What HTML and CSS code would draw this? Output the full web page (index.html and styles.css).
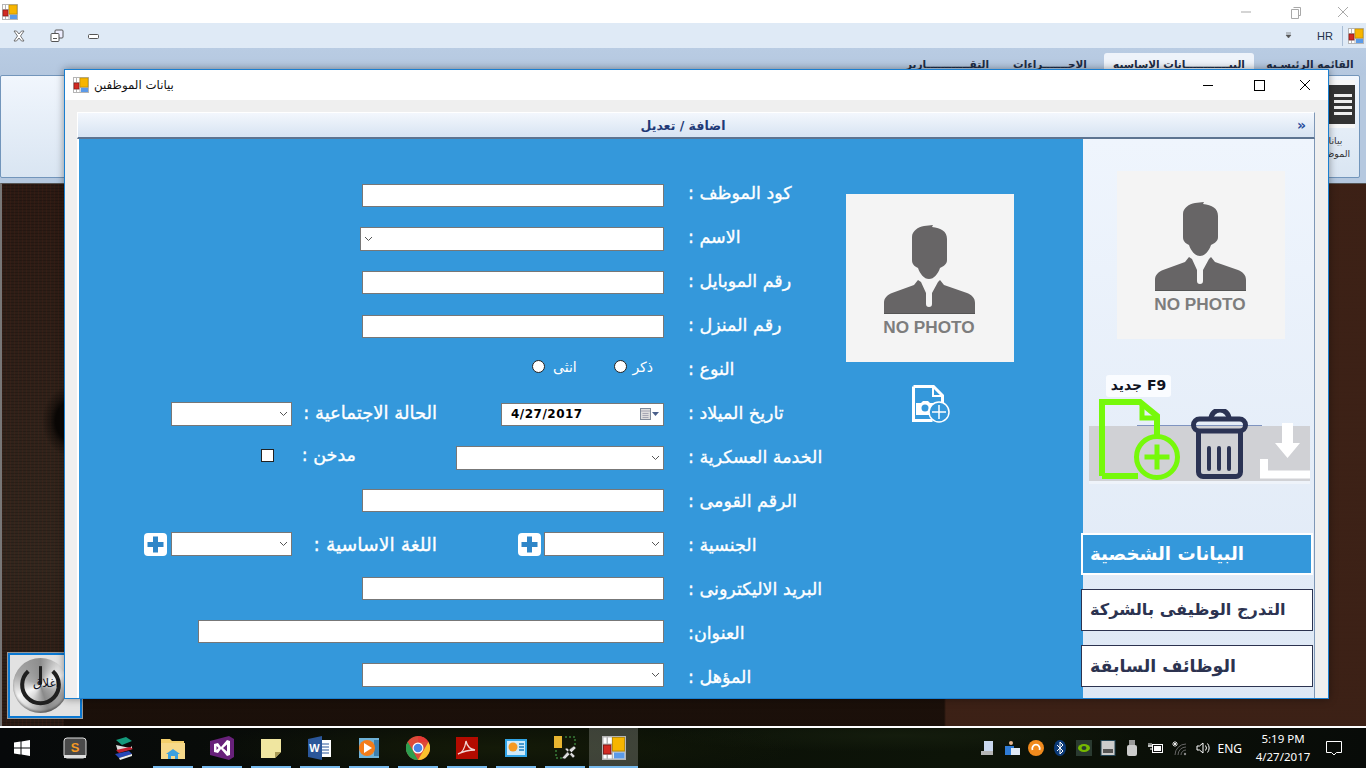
FILE: index.html
```html
<!DOCTYPE html>
<html lang="ar">
<head>
<meta charset="utf-8">
<title>HR</title>
<link rel="stylesheet" href="styles.css">
</head>
<body>
<svg class="defs" width="0" height="0">
  <symbol id="app" viewBox="0 0 16 16">
    <rect x="0.5" y="0.5" width="15" height="15" fill="#fff" stroke="#b5b5b5"/>
    <path d="M0 5.500h7M0 12h7M3.500 0v16M7 0v16M7 10.500h9" stroke="#b5b5b5" fill="none"/>
    <rect x="7" y="1" width="8" height="9" fill="#f7b500" stroke="#b98a00" stroke-width=".6"/>
    <rect x="1" y="6" width="5" height="6" fill="#d22a22" stroke="#7c1512" stroke-width=".6"/>
    <rect x="8" y="11" width="7" height="4" fill="#5b9ae8"/>
  </symbol>
  <symbol id="person" viewBox="0 0 168 168">
    <path d="M38 119v-10c0-5 3-8 8-10l22-8 4-5 3 2 5 11v11a3 3 0 0 0 6 0V99l6-11 2-2 4 5 23 8c5 2 8 5 8 10v10z" fill="#676566"/>
    <path d="M66 43c0-6 6-10 12-11l9-1-1 2c9 1 15 4 15 12v21c0 4-3 6-7 8-2 6-6 11-11 11s-9-5-11-11c-4-2-6-4-6-8z" fill="#676566"/>
    <rect x="38" y="119" width="91" height="1" fill="#555"/>
  </symbol>
  <symbol id="chev" viewBox="0 0 9 6">
    <path d="M1 1l3.500 3.500L8 1" fill="none" stroke="#555" stroke-width="1"/>
  </symbol>
  <symbol id="plus" viewBox="0 0 23 23">
    <rect width="23" height="23" rx="4" fill="#fff"/>
    <path d="M11.500 3.500v16M3.500 11.500h16" stroke="#2f86c8" stroke-width="5"/>
  </symbol>
</svg>

<div class="desktop">
  <div class="app-title">
    <svg class="app-icon"><use href="#app"/></svg>
    <div class="win-ctrls faint">
      <svg class="ctl" viewBox="0 0 46 20"><path d="M13 10h10" stroke="#a9a9a9"/></svg>
      <svg class="ctl" viewBox="0 0 46 20"><path d="M19.500 5.500h7v8h-2M17.500 7.500h7v9h-7z" stroke="#a9a9a9" fill="#fff"/></svg>
      <svg class="ctl" viewBox="0 0 46 20"><path d="M18 5l10 10M28 5L18 15" stroke="#a9a9a9"/></svg>
    </div>
  </div>

  <div class="qat">
    <svg class="qat-btn" viewBox="0 0 14 12"><path d="M2 1h2.500L7 4l2.500-3H12L8.500 6 12 11H9.500L7 8l-2.500 3H2l3.500-5z" fill="#fff" stroke="#555" stroke-width=".8"/></svg>
    <svg class="qat-btn" viewBox="0 0 14 14"><rect x="5" y="1" width="8" height="8" rx="1" fill="#eef" stroke="#555"/><rect x="1" y="4.500" width="8" height="8" rx="1" fill="#fff" stroke="#555"/><path d="M3 9.500h4" stroke="#555"/></svg>
    <svg class="qat-btn" viewBox="0 0 14 14"><rect x="2.500" y="5.500" width="10" height="4" rx="1" fill="#fff" stroke="#555"/></svg>
    <div class="qat-right">
      <svg class="qat-arrow" viewBox="0 0 7 7"><path d="M1 1h5M1 3h5L3.500 6z" stroke="#555" fill="#555" stroke-width=".6"/></svg>
      <span class="hr">HR</span>
      <span class="qat-sep"></span>
      <svg class="app-icon"><use href="#app"/></svg>
    </div>
  </div>

  <div class="tabs" dir="rtl">
    <span class="tab t1">القائمه الرئيسـيه</span>
    <span class="tab t2 active">البيــــــــــــانات الاساسيه</span>
    <span class="tab t3">الاجـــــــراءات</span>
    <span class="tab t4">التقــــــــــــارير</span>
  </div>

  <div class="ribbon">
    <div class="ribbon-box">
      <div class="ribbon-item">
        <div class="menu-thumb"><span></span><span></span><span></span><span></span></div>
        <div class="ribbon-label">بيانات<br>الموظفين</div>
      </div>
    </div>
  </div>

  <div class="wood">
    <div class="close-btn">
      <div class="metal">
        <svg class="power" viewBox="0 0 54 54">
          <path d="M15 13A18 18 0 1 0 39 13" fill="none" stroke="#202020" stroke-width="4"/>
          <path d="M27 8v18" stroke="#202020" stroke-width="3"/>
        </svg>
      </div>
      <span class="close-text">اغلاق</span>
    </div>
  </div>

  <div class="white-line"></div>

  <div class="taskbar">
    <div class="start">
      <svg viewBox="0 0 16 16" width="16" height="16"><path d="M0 2.500L6.500 1.500v6H0zM7.500 1.400L16 0v7.500H7.500zM0 8.500h6.500v6L0 13.500zM7.500 8.500H16V16l-8.500-1.400z" fill="#fff"/></svg>
    </div>
    <div class="tile"><svg viewBox="0 0 24 24"><rect x="1" y="2" width="22" height="20" rx="3" fill="#4a4a4a" stroke="#ddd"/><rect x="1" y="19" width="22" height="3" fill="#ddd"/><text x="12" y="16" class="sub-s">S</text></svg></div>
    <div class="tile"><svg viewBox="0 0 24 24"><path d="M4 4l10-3 6 4-10 4z" fill="#149a7c"/><path d="M4 9l14 3 2-2v3L6 16z" fill="#ddd"/><path d="M4 14l14-3 3 2-14 4z" fill="#c21f2e"/><path d="M3 18l14-3 3 3-13 4z" fill="#2747b8"/><path d="M7 22l13-4v2L8 24z" fill="#eee"/></svg></div>
    <div class="tile run"><svg viewBox="0 0 24 24"><path d="M0 3h9l2 2h12v6H0z" fill="#f3cf6b"/><rect y="7" width="24" height="16" fill="#f6d98a"/><path d="M7 23v-5h10v5h-3v-3h-4v3z" fill="#3aa0e0"/><path d="M5 18l7-5 7 5z" fill="#3aa0e0"/></svg></div>
    <div class="tile run"><svg viewBox="0 0 24 24"><path d="M0 5l19-5 5 3v18l-5 3L0 19z" fill="#68217a"/><path d="M4 8l4-1 3 4 6-7 3 1v14l-3 1-6-7-3 4-4-1zM6.500 10v4l2-2zM13 12l4 3.500v-7z" fill="#fff" fill-rule="evenodd"/></svg></div>
    <div class="tile run"><svg viewBox="0 0 24 24"><path d="M2 3h20v13l-6 6H2z" fill="#f0e6a0"/><path d="M22 16l-6 6v-6z" fill="#a89a55"/></svg></div>
    <div class="tile run"><svg viewBox="0 0 24 24"><rect x="10" y="4" width="13" height="17" fill="#fff"/><path d="M14 8h7M14 11h7M14 14h7M14 17h7" stroke="#2b579a"/><path d="M0 3l14-3v24L0 21z" fill="#2b579a"/><text x="6.500" y="16" class="sub-w">W</text></svg></div>
    <div class="tile run"><svg viewBox="0 0 24 24"><rect x="2" y="2" width="20" height="20" fill="#6fb2d8"/><rect x="17" y="4" width="5" height="16" fill="#3d7fae"/><circle cx="10" cy="12" r="8" fill="#f47c1a"/><path d="M7 7l8 5-8 5z" fill="#fff"/></svg></div>
    <div class="tile run"><svg viewBox="0 0 24 24"><circle cx="12" cy="12" r="12" fill="#dd4b39"/><path d="M12 0a12 12 0 0 1 10.400 6H12z" fill="#e53935"/><path d="M1.600 6L7 15l-1.500 7A12 12 0 0 1 1.600 6z" fill="#3aa757"/><path d="M12 24l5-8.500L22.400 6A12 12 0 0 1 12 24z" fill="#fbc02d"/><path d="M1.600 6L7 15 12 24a12 12 0 0 1-10.400-18z" fill="#2e9e4f"/><circle cx="12" cy="12" r="5.500" fill="#fff"/><circle cx="12" cy="12" r="4.300" fill="#4a84e8"/></svg></div>
    <div class="tile run"><svg viewBox="0 0 24 24"><rect x="1" y="1" width="22" height="22" fill="#b30b00"/><path d="M3 18c4-1 7-6 8-13 1 5 3 8 9 9-6 0-11 1-17 4z" fill="none" stroke="#f3d6d3" stroke-width="1.300"/></svg></div>
    <div class="tile run"><svg viewBox="0 0 24 24"><rect x="1" y="3" width="22" height="18" fill="#31a5e6"/><rect x="3" y="5" width="18" height="14" fill="#cfeaf9"/><circle cx="9" cy="11" r="4.500" fill="#f59a23"/><path d="M15 8h5M15 11h5M15 14h5" stroke="#1d7fc1" stroke-width="1.500"/></svg></div>
    <div class="tile run"><svg viewBox="0 0 24 24"><rect x="1" y="0" width="8" height="12" fill="#e8b530"/><path d="M12 1h10v10M3 14v8h8" fill="none" stroke="#4caf50" stroke-dasharray="2 2"/><path d="M9 22l8-9 4-3 2 2-3 3-8 8zM12 13l8 9 2-2-8-8z" fill="#ddd" stroke="#333" stroke-width=".5"/></svg></div>
    <div class="tile active-app run-full"><svg viewBox="0 0 24 24"><use href="#app"/></svg></div>
    <div class="tray">
      <svg viewBox="0 0 16 16"><rect x="4" y="1" width="9" height="12" fill="#c9d8ee"/><rect x="1" y="11" width="12" height="4" fill="#b5b5b5"/></svg>
      <svg viewBox="0 0 16 16"><circle cx="7" cy="3" r="2" fill="#e8b890"/><rect x="1" y="6" width="9" height="9" fill="#2f7cd6"/><rect x="7" y="8" width="9" height="7" fill="#dfe9f5"/></svg>
      <svg viewBox="0 0 16 16"><circle cx="8" cy="8" r="8" fill="#f08a1d"/><path d="M4.500 10a3.800 3.800 0 1 1 7 0" fill="none" stroke="#fff" stroke-width="1.800"/></svg>
      <svg viewBox="0 0 16 16"><ellipse cx="8" cy="8" rx="6" ry="8" fill="#0b3a78"/><path d="M5 5l6 6-3 3V2l3 3-6 6" fill="none" stroke="#fff"/></svg>
      <svg viewBox="0 0 16 16"><rect width="16" height="16" fill="#2a3a30"/><ellipse cx="8" cy="8" rx="6" ry="4" fill="#76b900"/><ellipse cx="8" cy="8" rx="2.500" ry="2" fill="#2a3a30"/></svg>
      <svg viewBox="0 0 16 16"><rect x="1" y="0.500" width="14" height="15" fill="#ccc" stroke="#245"/><rect x="3" y="9" width="10" height="4" fill="#555"/></svg>
      <svg viewBox="0 0 16 16"><rect x="5" y="0" width="6" height="5" fill="#999"/><rect x="3" y="5" width="10" height="11" rx="2" fill="#ccc"/></svg>
      <svg viewBox="0 0 16 16"><path d="M1 3v4M3 3v4M0 6h4M2 9h2" stroke="#fff" fill="none"/><rect x="4.500" y="4.500" width="10" height="8" fill="#111" stroke="#fff"/><rect x="6" y="6" width="7" height="5" fill="#fff"/></svg>
      <svg viewBox="0 0 16 16"><path d="M3 15a11 11 0 0 1 11-11M6 15a8 8 0 0 1 8-8M9 15a5 5 0 0 1 5-5" fill="none" stroke="#666"/><circle cx="13" cy="14" r="1.200" fill="#888"/><path d="M3 1v6M0 4h6M1 2l4 4M5 2L1 6" stroke="#fff" stroke-width=".8"/></svg>
      <svg viewBox="0 0 16 16"><path d="M1 6h2.500L7 3v10L3.500 10H1z" fill="none" stroke="#fff"/><path d="M9.500 5.500a4 4 0 0 1 0 5M11.500 3.500a7 7 0 0 1 0 9" fill="none" stroke="#fff"/></svg>
      <span class="eng">ENG</span>
      <div class="clock"><span>5:19 PM</span><span>4/27/2017</span></div>
      <svg class="notif" viewBox="0 0 16 16"><path d="M.5 1.500h15v11h-5L8 15l-2.500-2.500h-5z" fill="none" stroke="#fff"/></svg>
    </div>
  </div>

  <section class="dialog">
    <header class="dlg-title">
      <svg class="dlg-icon"><use href="#app"/></svg>
      <span class="dlg-name">بيانات الموظفين</span>
      <div class="win-ctrls">
        <svg class="ctl" viewBox="0 0 46 20"><path d="M13 10.500h10" stroke="#000" stroke-width="1"/></svg>
        <svg class="ctl" viewBox="0 0 46 20"><rect x="18.500" y="5.500" width="10" height="10" fill="none" stroke="#000"/></svg>
        <svg class="ctl" viewBox="0 0 46 20"><path d="M18 5l10 10M28 5L18 15" stroke="#000"/></svg>
      </div>
    </header>
    <div class="dlg-body">
      <div class="panel-head">
        <span class="panel-title">اضافة / تعديل</span>
        <span class="chevrons">»</span>
      </div>
      <div class="panel-main">
        <form class="form">
          <div class="fields-col">
            <div class="row"><input class="box w302" type="text"></div>
            <div class="row"><div class="box combo chev-left w304"><svg class="chev"><use href="#chev"/></svg></div></div>
            <div class="row"><input class="box w302" type="text"></div>
            <div class="row"><input class="box w302" type="text"></div>
            <div class="row">
              <div class="gender">
                <span class="radio"></span><span class="rtext anth">انثى</span>
                <span class="radio second"></span><span class="rtext">ذكر</span>
              </div>
            </div>
            <div class="row split">
              <div class="sub-left">
                <div class="box combo w121"><svg class="chev"><use href="#chev"/></svg></div>
                <label class="lbl2" dir="rtl">الحالة الاجتماعية :</label>
              </div>
              <div class="sub-right">
                <div class="box date"><span class="date-val">4/27/2017</span>
                  <svg class="cal" viewBox="0 0 20 14"><rect x=".5" y="1.500" width="10" height="11" fill="#ddd" stroke="#7f8a99"/><path d="M1 4h9M2.500 6.500h6M2.500 8.500h6M2.500 10.500h6" stroke="#99a" stroke-width=".8"/><path d="M12 5h7l-3.500 4z" fill="#4a5f8a"/></svg>
                </div>
              </div>
            </div>
            <div class="row split">
              <div class="sub-left smoker">
                <span class="check"></span>
                <label class="lbl3" dir="rtl">مدخن :</label>
              </div>
              <div class="sub-right">
                <div class="box combo w208"><svg class="chev"><use href="#chev"/></svg></div>
              </div>
            </div>
            <div class="row"><input class="box w302" type="text"></div>
            <div class="row split">
              <div class="sub-left">
                <svg class="plus plus-lang"><use href="#plus"/></svg>
                <div class="box combo w121"><svg class="chev"><use href="#chev"/></svg></div>
                <label class="lbl2 lang" dir="rtl">اللغة الاساسية :</label>
              </div>
              <div class="sub-right">
                <svg class="plus"><use href="#plus"/></svg>
                <div class="box combo w120"><svg class="chev"><use href="#chev"/></svg></div>
              </div>
            </div>
            <div class="row"><input class="box w302" type="text"></div>
            <div class="row"><input class="box w466" type="text"></div>
            <div class="row"><div class="box combo w302"><svg class="chev"><use href="#chev"/></svg></div></div>
          </div>
          <div class="labels-col" dir="rtl">
            <label class="lbl">كود الموظف :</label>
            <label class="lbl">الاسم :</label>
            <label class="lbl">رقم الموبايل :</label>
            <label class="lbl">رقم المنزل :</label>
            <label class="lbl">النوع :</label>
            <label class="lbl">تاريخ الميلاد :</label>
            <label class="lbl">الخدمة العسكرية :</label>
            <label class="lbl">الرقم القومى :</label>
            <label class="lbl">الجنسية :</label>
            <label class="lbl">البريد الاليكترونى :</label>
            <label class="lbl">العنوان:</label>
            <label class="lbl">المؤهل :</label>
          </div>
          <div class="photo-col">
            <div class="photo">
              <svg class="person"><use href="#person"/></svg>
              <span class="nophoto">NO PHOTO</span>
            </div>
            <svg class="add-photo" viewBox="0 0 38 38">
              <path d="M1.500 1.500h20l9 9v13M1.500 1.500v34h19" fill="none" stroke="#fff" stroke-width="3"/>
              <path d="M21 2v9h9" fill="none" stroke="#fff" stroke-width="2"/>
              <path d="M4 18h5l2-2h5l2 2h3v12H4z" fill="#fff"/>
              <circle cx="13" cy="23" r="3.500" fill="#3498db"/>
              <circle cx="27" cy="27" r="10" fill="#3498db" stroke="#fff" stroke-width="1.500"/>
              <path d="M27 20v14M20 27h14" stroke="#fff" stroke-width="1.500"/>
            </svg>
          </div>
        </form>
        <aside class="side">
          <div class="photo side-photo">
            <svg class="person"><use href="#person"/></svg>
            <span class="nophoto">NO PHOTO</span>
          </div>
          <div class="strip">
            <span class="strip-line"></span>
            <span class="tip" dir="rtl">F9 جديد</span>
            <svg class="tool t-new" viewBox="0 0 81 82">
              <path d="M3 77V3h38l17 14v21M3 77h36" fill="none" stroke="#76f90a" stroke-width="6"/>
              <path d="M43 3v16h15" fill="none" stroke="#76f90a" stroke-width="5"/>
              <circle cx="58" cy="58" r="20.500" fill="#d0d1d5" stroke="#76f90a" stroke-width="5"/>
              <path d="M58 45.500v25M45.500 58h25" stroke="#76f90a" stroke-width="5"/>
            </svg>
            <svg class="tool t-trash" viewBox="0 0 58 70">
              <path d="M20 10a9 9 0 0 1 18 0" fill="none" stroke="#2b3354" stroke-width="5"/>
              <rect x="2.500" y="10" width="52" height="12" rx="6" fill="none" stroke="#2b3354" stroke-width="5"/>
              <path d="M7.500 22v41a4.500 4.500 0 0 0 4.500 4.500h33a4.500 4.500 0 0 0 4.500-4.500V22" fill="none" stroke="#2b3354" stroke-width="5"/>
              <path d="M18 39v21M28 39v21M38 39v21" stroke="#2b3354" stroke-width="4" stroke-linecap="round"/>
            </svg>
            <svg class="tool t-down" viewBox="0 0 50 56">
              <path d="M22 0h11v20h7L27.500 35 15 20h7z" fill="#fff"/>
              <path d="M4 36v15.500h46" fill="none" stroke="#fff" stroke-width="8"/>
            </svg>
          </div>
          <nav class="side-nav">
            <a class="nav-btn on" dir="rtl">البيانات الشخصية</a>
            <a class="nav-btn second" dir="rtl">التدرج الوظيفى بالشركة</a>
            <a class="nav-btn third" dir="rtl">الوظائف السابقة</a>
          </nav>
        </aside>
      </div>
    </div>
  </section>
</div>
</body>
</html>
```

FILE: styles.css
```css
* { box-sizing: border-box; }
html, body { margin: 0; padding: 0; }
body { font-family: "DejaVu Sans", sans-serif; }
.defs { position: absolute; }

.desktop {
  position: relative;
  width: 1366px;
  height: 768px;
  overflow: hidden;
  display: flex;
  flex-direction: column;
  background: #000;
}

/* App chrome */
.app-title {
  height: 23px;
  background: #fff;
  display: flex;
  align-items: center;
  justify-content: space-between;
  padding: 0 2px;
}
.app-icon { width: 16px; height: 16px; display: block; }
.win-ctrls { display: flex; gap: 0; }
.ctl { width: 46px; height: 20px; display: block; }
.app-title .win-ctrls { margin-right: -2px; }

.qat {
  height: 25px;
  background: #dfeaf6;
  display: flex;
  align-items: center;
  padding: 0 2px 0 12px;
}
.qat-btn { width: 14px; height: 14px; margin-right: 24px; }
.qat-btn:nth-child(2) { margin-right: 22px; }
.qat-right { margin-left: auto; display: flex; align-items: center; }
.qat-arrow { width: 7px; height: 7px; margin-right: 25px; }
.hr { font: 11px "Liberation Sans", sans-serif; color: #22324a; margin-right: 9px; }
.qat-sep { width: 1px; height: 20px; background: #a9bdd4; margin-right: 5px; }

.tabs {
  height: 27px;
  background: linear-gradient(#b9cce3, #b4c7df);
  display: flex;
  align-items: flex-end;
  padding: 0 10px 0 0;
  font-size: 10.500px;
  font-weight: bold;
  color: #1f2d45;
}
.tab { height: 22px; padding: 5px 0 0; text-align: center; white-space: nowrap; }
.t1 { width: 92px; }
.t2 { width: 150px; margin-right: 10px; background: #eef3fa; border-radius: 3px 3px 0 0; }
.t3 { width: 80px; margin-right: 14px; }
.t4 { width: 82px; margin-right: 21px; }

.ribbon {
  height: 108px;
  background: #b5c8df;
  padding: 0 6px 5px 0;
}
.ribbon-box {
  height: 103px;
  border: 1px solid #7295bb;
  border-radius: 2px;
  background: linear-gradient(#f1f6fd, #d9e5f2);
  display: flex;
  justify-content: flex-end;
  padding: 4px 4px 0 0;
}
.ribbon-item { width: 48px; }
.menu-thumb {
  height: 48px;
  background: #333;
  border-top: 5px solid #f6f6f6;
  border-bottom: 4px solid #f6f6f6;
  display: flex;
  flex-direction: column;
  align-items: flex-end;
  justify-content: center;
  gap: 3px;
  padding-right: 3px;
}
.menu-thumb span { width: 18px; height: 3px; background: #eee; }
.ribbon-label {
  font-size: 9.500px;
  line-height: 13px;
  text-align: center;
  margin-top: 6px;
  white-space: nowrap;
  color: #333;
  direction: rtl;
}

/* Wooden background */
.wood {
  height: 543px;
  position: relative;
  border-left: 2px solid #777;
  border-top: 1px solid #555;
  background:
    radial-gradient(ellipse 30px 36px at 70px 237px, #0a0705 55%, rgba(10,7,5,.5) 72%, transparent 100%),
    repeating-linear-gradient(90deg, rgba(120,40,25,.12) 0 1px, transparent 1px 4px),
    repeating-linear-gradient(0deg, rgba(0,0,0,.18) 0 1px, transparent 1px 3px),
    linear-gradient(180deg, #2b1a13 0, #32271e 380px, #291b14 540px),
    #2b1a13;
}
.wood::after {
  content: "";
  position: absolute;
  left: 62px;
  right: 0;
  top: 0;
  bottom: 0;
  background: linear-gradient(90deg, #1a0f09 0 880px, #3d2116 882px);
  opacity: .95;
}
.close-btn {
  position: absolute;
  z-index: 1;
  left: 6px;
  top: 469px;
  width: 74px;
  height: 65px;
  background: #e2e2e2;
  border: 2px solid #0a78d2;
  outline: 1px solid #999;
  display: flex;
  align-items: center;
  padding-left: 3px;
}
.metal {
  width: 55px;
  height: 55px;
  border-radius: 50%;
  background: conic-gradient(#8d8d8d, #dcdcdc 12%, #f4f4f4 18%, #a5a5a5 32%, #8a8a8a 45%, #dedede 60%, #f6f6f6 68%, #a8a8a8 82%, #8d8d8d);
  box-shadow: inset 0 -2px 2px rgba(0,0,0,.35);
}
.power { width: 55px; height: 55px; display: block; }
.close-text {
  position: absolute;
  left: 23px;
  top: 21px;
  font-size: 12px;
  color: #10131f;
  direction: rtl;
  white-space: nowrap;
}
.white-line { height: 2px; background: #fff; }

/* Taskbar */
.taskbar {
  height: 40px;
  display: flex;
  align-items: stretch;
  background:
    radial-gradient(ellipse 300px 30px at 500px 20px, #141a08, transparent),
    radial-gradient(ellipse 240px 16px at 900px 8px, #141c0d, transparent),
    linear-gradient(90deg, #07090a, #0a0f07 40%, #0d1408 70%, #080b08);
}
.start { width: 50px; display: flex; align-items: center; justify-content: center; padding-right: 6px; }
.tile { width: 49px; position: relative; display: flex; align-items: center; justify-content: center; }
.tile svg { width: 24px; height: 24px; display: block; }
.run::after {
  content: "";
  position: absolute;
  left: 5px;
  bottom: 0;
  width: 40px;
  height: 2px;
  background: #76b9ed;
}
.active-app { background: rgba(255,255,255,.2); }
.run-full::after {
  content: "";
  position: absolute;
  left: 0;
  right: 0;
  bottom: 0;
  height: 2px;
  background: #76b9ed;
}
.sub-s { font: bold 13px "Liberation Sans", sans-serif; fill: #f59a23; text-anchor: middle; }
.sub-w { font: bold 11px "Liberation Sans", sans-serif; fill: #fff; text-anchor: middle; }

.tray {
  margin-left: auto;
  display: flex;
  align-items: center;
  padding-right: 24px;
  color: #fff;
  font-family: "Noto Sans", sans-serif;
}
.tray svg { width: 16px; height: 16px; margin-right: 8px; display: block; }
.eng { font-size: 12px; margin-left: -3px; }
.clock {
  display: flex;
  flex-direction: column;
  align-items: center;
  font-size: 11.500px;
  line-height: 18px;
  margin-left: 10px;
  width: 62px;
}
.tray .notif { width: 16px; height: 16px; margin: 0 0 0 12px; }

/* Employee dialog: a window on the desktop */
.dialog {
  position: absolute;
  z-index: 5;
  left: 64px;
  top: 69px;
  width: 1265px;
  height: 630px;
  border: 1px solid #1a7fd0;
  background: #efefef;
  box-shadow: 0 0 8px rgba(0,0,0,.4);
  display: flex;
  flex-direction: column;
}
.dlg-title {
  height: 30px;
  background: #fff;
  display: flex;
  align-items: center;
  padding-left: 8px;
  flex: none;
}
.dlg-icon { width: 16px; height: 16px; }
.dlg-name { font-size: 11.800px; margin-left: 5px; direction: rtl; color: #111; }
.dlg-title .win-ctrls { margin-left: auto; margin-right: 0; }

.dlg-body {
  flex: 1;
  padding: 12px 13px 0 12px;
  display: flex;
  flex-direction: column;
  min-height: 0;
}
.panel-head {
  height: 27px;
  flex: none;
  position: relative;
  display: flex;
  align-items: center;
  justify-content: center;
  padding-right: 26px;
  background: linear-gradient(#f3f7fd, #d9e5f3 92%);
  border-top: 1px solid #fff;
  border-left: 1px solid #fff;
  border-right: 1px solid #7e97b6;
  border-bottom: 2px solid #5d7491;
  font-weight: bold;
}
.panel-title { font-size: 12.500px; color: #1f3a77; direction: rtl; }
.chevrons { position: absolute; right: 8px; top: 4px; font-size: 14px; color: #2a4d9c; }

.panel-main {
  flex: 1;
  display: flex;
  min-height: 0;
  border-left: 2px solid #fff;
  border-right: 1px solid #7e97b6;
  background: linear-gradient(#eff5fd, #dee8f5);
}

.form {
  position: relative;
  width: 1004px;
  background: #3498db;
  flex: none;
  display: flex;
  align-items: flex-start;
}
.fields-col { width: 585px; padding-top: 34.600px; flex: none; }
.row {
  height: 43.640px;
  display: flex;
  align-items: center;
  justify-content: flex-end;
}
.split { justify-content: flex-start; }
.sub-left {
  width: 365px;
  display: grid;
  grid-template-columns: 92px 121px 145px;
  align-items: center;
}
.sub-right {
  width: 220px;
  display: flex;
  justify-content: flex-end;
  align-items: center;
  gap: 3px;
}
.box {
  display: block;
  height: 24px;
  background: #fff;
  border: 1px solid #777;
  border-radius: 0;
  padding: 0;
  margin: 0;
  outline: none;
}
input.box { height: 23px; }
.w302 { width: 302px; }
.w304 { width: 304px; }
.w466 { width: 466px; }
.w208 { width: 208px; margin-top: 1px; }
.w121 { width: 121px; grid-column: 2; }
.w120 { width: 120px; }
.combo { display: flex; align-items: center; justify-content: flex-end; padding-right: 3px; }
.chev-left { justify-content: flex-start; padding-left: 3px; padding-right: 0; }
.chev { width: 9px; height: 6px; display: block; }

.lbl, .lbl2, .lbl3 {
  color: #fff;
  font-size: 17.500px;
  font-weight: normal;
  white-space: nowrap;
  -webkit-text-stroke: .35px #fff;
}
.labels-col {
  margin-left: 24px;
  padding-top: 31.500px;
  display: flex;
  flex-direction: column;
  align-items: flex-end;
}
.lbl { display: block; height: 44px; line-height: 44px; }
.lbl2 { grid-column: 3; text-align: right; margin-bottom: 2px; font-size: 18px; }
.lbl2.lang { margin-bottom: 0; font-size: 18.800px; }
.lbl3 { margin-bottom: 4px; }

.smoker { display: flex; justify-content: flex-end; align-items: center; padding-right: 88px; }
.check { width: 13px; height: 13px; background: #fff; border: 1px solid #222; margin: 0 28px 4px 0; }

.gender {
  display: flex;
  align-items: center;
  padding-right: 11px;
  margin-bottom: 7px;
  color: #fff;
  font-size: 14px;
}
.radio { width: 13px; height: 13px; border-radius: 50%; background: #fff; border: 1px solid #222; }
.radio.second { margin-left: 36px; }
.rtext { margin-left: 5px; margin-top: 2px; direction: rtl; }
.anth { margin-left: 6px; width: 27px; text-align: center; }

.date { width: 163px; display: flex; align-items: center; justify-content: space-between; padding: 0 3px 0 9px; height: 23px; margin-top: 1px; }
.date-val { font-size: 12px; font-weight: bold; letter-spacing: .5px; color: #000; }
.cal { width: 20px; height: 14px; display: block; }

.plus { width: 23px; height: 23px; display: block; }
.plus-lang { grid-column: 1; justify-self: end; margin-right: 4px; }

.photo-col {
  position: absolute;
  left: 767px;
  top: 55px;
  width: 168px;
  display: flex;
  flex-direction: column;
  align-items: center;
}
.photo {
  position: relative;
  width: 168px;
  height: 168px;
  background: #f4f4f4;
  flex: none;
}
.person { width: 168px; height: 168px; display: block; }
.nophoto {
  position: absolute;
  left: -2px;
  right: 0;
  top: 123px;
  text-align: center;
  font: bold 17.200px "Liberation Sans", sans-serif;
  color: #7d7d7d;
}
.add-photo { width: 38px; height: 38px; margin-top: 23px; margin-left: 2px; display: block; }

.side { flex: 1; display: flex; flex-direction: column; min-width: 0; position: relative; z-index: 1; }
.side-photo { margin: 32px 0 0 34px; }
.strip {
  position: relative;
  margin: 87px 0 0 6px;
  width: 221px;
  height: 58px;
  background: #d0d1d5;
  border-bottom: 3px solid #eef3fa;
}
.strip-line {
  position: absolute;
  left: 48px;
  top: -1px;
  width: 125px;
  height: 1px;
  background: #7f94c0;
}
.tip {
  position: absolute;
  left: 17px;
  top: -51px;
  width: 65px;
  height: 22px;
  background: #fafcff;
  border-radius: 3px;
  font-size: 14px;
  font-weight: bold;
  color: #10131f;
  text-align: center;
  line-height: 21px;
  white-space: nowrap;
}
.tool { position: absolute; display: block; }
.t-new { left: 10px; top: -27px; width: 81px; height: 82px; }
.t-trash { left: 102px; top: -17px; width: 58px; height: 70px; }
.t-down { left: 171px; top: -3px; width: 50px; height: 56px; }

.side-nav {
  margin: 49px 0 0 -2px;
  width: 232px;
  display: flex;
  flex-direction: column;
  gap: 14px;
}
.nav-btn {
  height: 42px;
  border: 1px solid #2c3350;
  background: #fff;
  color: #2c3350;
  font-size: 16.200px;
  font-weight: bold;
  display: block;
  text-align: left;
  line-height: 40px;
  padding-left: 8px;
  white-space: nowrap;
}
.nav-btn.third { font-size: 17.400px; line-height: 41px; }
.nav-btn.on {
  background: #3498db;
  color: #fff;
  border: 2px solid #fff;
  padding-left: 7px;
  font-size: 18.200px;
  line-height: 38px;
}
```
